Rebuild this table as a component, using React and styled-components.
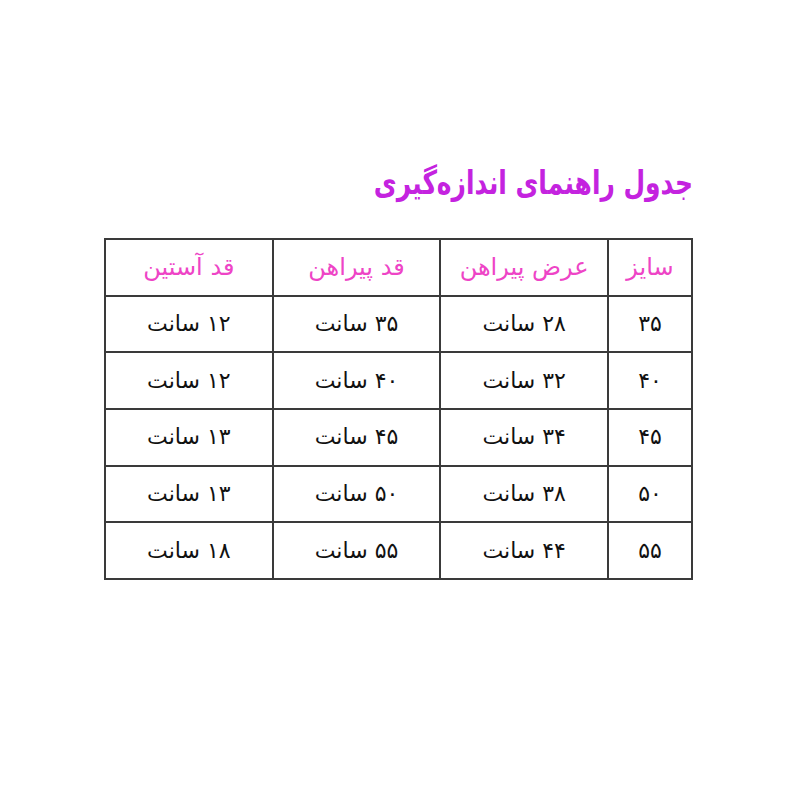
import styled, { createGlobalStyle } from "styled-components";

const GlobalStyle = createGlobalStyle`
    html, body {
        margin: 0;
        padding: 0;
        background: #ffffff;
    }
`;

const rows = [
    ['۳۵', '۲۸', '۳۵', '۱۲'],
    ['۴۰', '۳۲', '۴۰', '۱۲'],
    ['۴۵', '۳۴', '۴۵', '۱۳'],
    ['۵۰', '۳۸', '۵۰', '۱۳'],
    ['۵۵', '۴۴', '۵۵', '۱۸'],
];

const headers = ['سایز', 'عرض پیراهن', 'قد پیراهن', 'قد آستین'];

export default function App() {
    return (
        <>
            <GlobalStyle />
            <Page>
                <Wrapper>
                    <Title>جدول راهنمای اندازه‌گیری</Title>
                    <Table>
                        <thead>
                            <tr>
                                {headers.map((h, i) => (
                                    <HeadCell key={h} narrow={i === 0}>{h}</HeadCell>
                                ))}
                            </tr>
                        </thead>
                        <tbody>
                            {rows.map((r, i) => (
                                <tr key={i}>
                                    <Cell narrow>{r[0]}</Cell>
                                    <Cell>{r[1]} سانت</Cell>
                                    <Cell>{r[2]} سانت</Cell>
                                    <Cell>{r[3]} سانت</Cell>
                                </tr>
                            ))}
                        </tbody>
                    </Table>
                </Wrapper>
            </Page>
        </>
    );
}

const Page = styled.div`
    width: 800px;
    height: 800px;
    display: flex;
    justify-content: center;
    font-family: "DejaVu Sans", "Noto Sans", sans-serif;
`;

const Wrapper = styled.div`
    width: 589px;
    padding-top: 161px;
    direction: rtl;
    display: flex;
    flex-direction: column;
    margin-left: -3px;
`;

const Title = styled.h1`
    margin: 0 0 33px 0;
    font-family: "DejaVu Sans Condensed", "DejaVu Sans", sans-serif;
    font-stretch: condensed;
    font-size: 33px;
    font-weight: bold;
    color: #c423df;
    line-height: 44px;
    transform: scaleX(0.84);
    transform-origin: right center;
`;

const Table = styled.table`
    border-collapse: collapse;
    width: 589px;
    table-layout: fixed;
`;

const HeadCell = styled.th`
    width: ${props => props.narrow ? '82px' : 'auto'};
    height: 54.7px;
    border: 2px solid #3a3a3a;
    color: #ee44c6;
    font-weight: normal;
    font-size: 24px;
    text-align: center;
    padding: 0;
    line-height: 1;
`;

const Cell = styled.td`
    height: 54.7px;
    border: 2px solid #3a3a3a;
    color: #111111;
    font-size: 22px;
    text-align: center;
    padding: 0;
    line-height: 1;
`;
